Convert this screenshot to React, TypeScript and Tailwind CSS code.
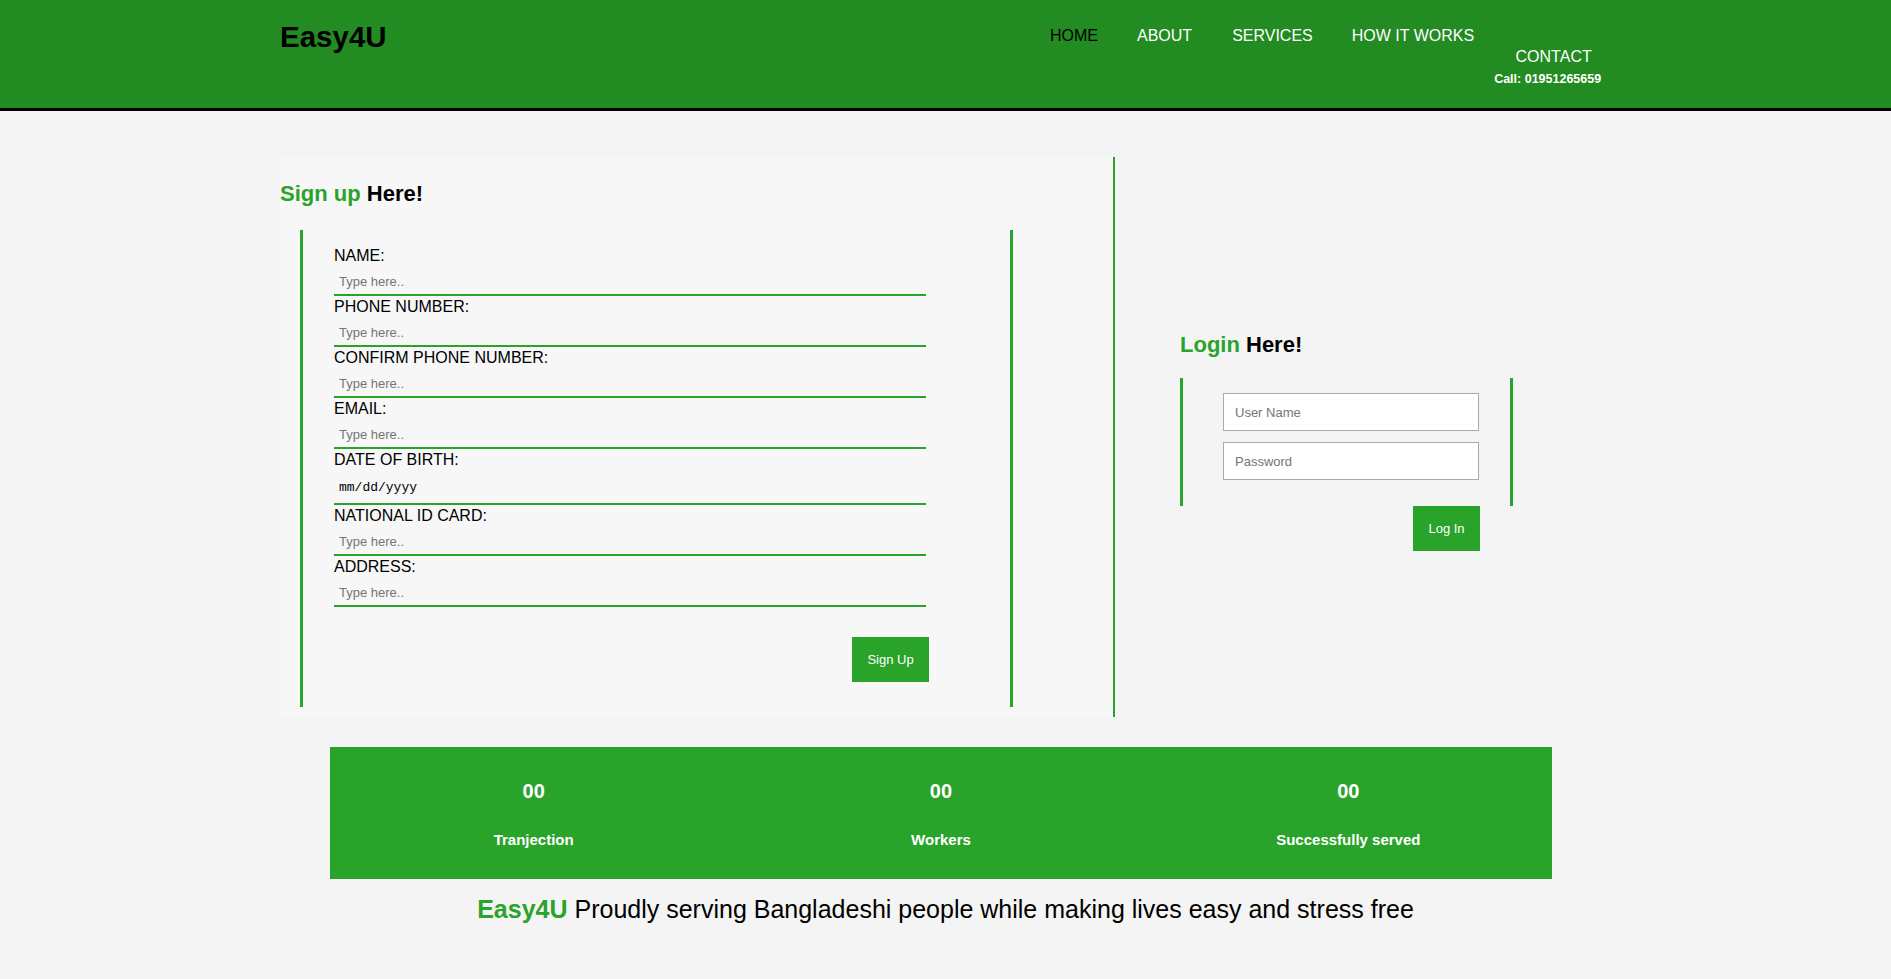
// Easy4U landing — signup / login / stats
const fields = [
  { label: 'NAME:' },
  { label: 'PHONE NUMBER:' },
  { label: 'CONFIRM PHONE NUMBER:' },
  { label: 'EMAIL:' },
  { label: 'DATE OF BIRTH:', date: true },
  { label: 'NATIONAL ID CARD:' },
  { label: 'ADDRESS:' },
];

const stats = [
  { value: '00', label: 'Tranjection' },
  { value: '00', label: 'Workers' },
  { value: '00', label: 'Successfully served' },
];

function Header() {
  return (
    <header className="h-[111px] bg-[#228b22] border-b-[3px] border-black">
      <div className="mx-auto flex w-[1331px] items-start">
        <h1 className="w-[770px] shrink-0 pt-[20px] text-[29.5px] font-bold leading-[33px] text-black">Easy4U</h1>
        <nav className="flex shrink-0 items-start whitespace-nowrap pt-[27px] text-[16px] leading-[18px]">
          <a className="text-black">HOME</a>
          <a className="ml-[39px] text-white">ABOUT</a>
          <a className="ml-[40px] text-white">SERVICES</a>
          <a className="ml-[39px] text-white">HOW IT WORKS</a>
          <div className="ml-[20px] mt-[21px] flex flex-col items-center text-white">
            <a className="pl-[12px]">CONTACT</a>
            <span className="mt-[6px] text-[12.5px] font-bold leading-[14px]">Call: 01951265659</span>
          </div>
        </nav>
      </div>
    </header>
  );
}

function SignupPanel() {
  return (
    <section className="w-[835px] shrink-0 border-r-2 border-[#2aa32a] bg-[#f7f7f7] pt-[24px]">
      <h2 className="text-[22px] font-bold leading-[25px]">
        <span className="text-[#2aa32a]">Sign up</span> <span className="text-black">Here!</span>
      </h2>
      <div className="mb-[10px] ml-[20px] mt-[24px] w-[713px] border-x-[3px] border-[#2aa32a] pb-[25px] pl-[31px] pt-[15px]">
        <form className="w-[595px]">
          {fields.map((f) => (
            <div key={f.label}>
              <label className="block pt-[2px] text-[16px] leading-[18px] text-black">{f.label}</label>
              {f.date ? (
                <div className="flex h-[36px] w-[592px] items-center border-b-2 border-[#2aa32a] pl-[5px] pt-[4px] font-['Liberation_Mono',monospace] text-[13px] text-black">
                  mm/dd/yyyy
                </div>
              ) : (
                <input
                  placeholder="Type here.."
                  className="block h-[31px] w-[592px] border-b-2 border-[#2aa32a] bg-transparent pl-[5px] pt-[4px] text-[13px] outline-none placeholder:text-[#757575]"
                />
              )}
            </div>
          ))}
          <div className="mt-[30px] flex justify-end">
            <button type="button" className="h-[45px] w-[77px] bg-[#2aa32a] text-[13px] text-white">
              Sign Up
            </button>
          </div>
        </form>
      </div>
    </section>
  );
}

function LoginPanel() {
  return (
    <section className="flex-1 pl-[65px] pt-[9px]">
      <h2 className="text-[22px] font-bold leading-[25px]">
        <span className="text-[#2aa32a]">Login</span> <span className="text-black">Here!</span>
      </h2>
      <div className="mt-[21px] w-[333px] border-x-[3px] border-[#2aa32a] pb-[26px] pl-[40px] pt-[15px]">
        <input
          placeholder="User Name"
          className="block h-[38px] w-[256px] border border-[#aaaaaa] bg-white pl-[11px] text-[13px] outline-none placeholder:text-[#757575]"
        />
        <input
          type="password"
          placeholder="Password"
          className="mt-[11px] block h-[38px] w-[256px] border border-[#aaaaaa] bg-white pl-[11px] text-[13px] outline-none placeholder:text-[#757575]"
        />
      </div>
      <div className="flex w-[333px] justify-end pr-[33px]">
        <button type="button" className="h-[45px] w-[67px] bg-[#2aa32a] text-[13px] text-white">
          Log In
        </button>
      </div>
    </section>
  );
}

export default function App() {
  return (
    <div className="min-h-screen bg-[#f4f4f4] font-['Liberation_Sans',Arial,sans-serif]">
      <Header />

      <main className="mx-auto mt-[46px] flex w-[1331px] items-center">
        <SignupPanel />
        <LoginPanel />
      </main>

      {/* Stats band */}
      <div className="mx-auto w-[1331px]">
        <div className="ml-[50px] mt-[30px] grid h-[132px] w-[1222px] grid-cols-3 bg-[#2aa32a] text-white">
          {stats.map((s) => (
            <div key={s.label} className="flex flex-col items-center pt-[33px]">
              <span className="text-[20px] font-bold leading-[23px]">{s.value}</span>
              <span className="mt-[28px] text-[15px] font-bold leading-[17px]">{s.label}</span>
            </div>
          ))}
        </div>
      </div>

      <p className="mt-[16px] text-center text-[25px] leading-[29px] text-black">
        <span className="font-bold text-[#2aa32a]">Easy4U</span> Proudly serving Bangladeshi people while making lives easy and stress free
      </p>
    </div>
  );
}
